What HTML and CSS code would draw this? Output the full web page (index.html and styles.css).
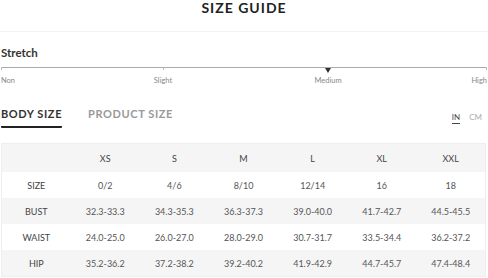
FILE: index.html
```html
<!DOCTYPE html>
<html lang="en">
<head>
    <meta charset="UTF-8">
    <meta name="viewport" content="width=device-width, initial-scale=1.0">
    <title>Size Guide</title>
    <link rel="stylesheet" href="styles.css">
</head>
<body>
    <div class="header">
        <h1>SIZE GUIDE</h1>
    </div>

    <div class="stretch">
        <h3>Stretch</h3>
        <div class="scale">
            <span class="tick tick-start"></span>
            <span class="tick tick-slight"></span>
            <span class="tick tick-end"></span>
            <span class="marker"></span>
        </div>
        <div class="scale-labels">
            <span class="lbl-non">Non</span>
            <span class="lbl-slight">Slight</span>
            <span class="lbl-medium">Medium</span>
            <span class="lbl-high">High</span>
        </div>
    </div>

    <div class="tabs">
        <div class="tab active">BODY SIZE</div>
        <div class="tab">PRODUCT SIZE</div>
        <div class="units">
            <span class="unit active">IN</span>
            <span class="unit">CM</span>
        </div>
    </div>

    <table class="size-table">
        <thead>
            <tr>
                <th></th>
                <th>XS</th>
                <th>S</th>
                <th>M</th>
                <th>L</th>
                <th>XL</th>
                <th>XXL</th>
            </tr>
        </thead>
        <tbody>
            <tr>
                <td>SIZE</td>
                <td>0/2</td>
                <td>4/6</td>
                <td>8/10</td>
                <td>12/14</td>
                <td>16</td>
                <td>18</td>
            </tr>
            <tr>
                <td>BUST</td>
                <td>32.3-33.3</td>
                <td>34.3-35.3</td>
                <td>36.3-37.3</td>
                <td>39.0-40.0</td>
                <td>41.7-42.7</td>
                <td>44.5-45.5</td>
            </tr>
            <tr>
                <td>WAIST</td>
                <td>24.0-25.0</td>
                <td>26.0-27.0</td>
                <td>28.0-29.0</td>
                <td>30.7-31.7</td>
                <td>33.5-34.4</td>
                <td>36.2-37.2</td>
            </tr>
            <tr>
                <td>HIP</td>
                <td>35.2-36.2</td>
                <td>37.2-38.2</td>
                <td>39.2-40.2</td>
                <td>41.9-42.9</td>
                <td>44.7-45.7</td>
                <td>47.4-48.4</td>
            </tr>
        </tbody>
    </table>
</body>
</html>
```

FILE: styles.css
```css
body {
    margin: 0;
    padding: 0;
    background: #fff;
    color: #333;
    font-family: 'Lato', 'Liberation Sans', sans-serif;
    width: 488px;
    overflow: hidden;
}
.header {
    height: 31px;
    border-bottom: 1px solid #f3f3f3;
    text-align: center;
}
h1 {
    margin: 0;
    font-size: 14px;
    line-height: 16px;
    font-weight: 700;
    letter-spacing: 1px;
    color: #222;
}
.stretch {
    padding: 0 1px;
}
h3 {
    margin: 14px 0 0;
    font-size: 11.5px;
    line-height: 14px;
    font-weight: 700;
    color: #333;
}
.scale {
    position: relative;
    height: 1px;
    margin-top: 7px;
    background: #aaa;
}
.tick {
    position: absolute;
    top: 0;
    width: 1px;
    height: 3px;
    background: #bbb;
}
.tick-start { left: 0; }
.tick-slight { left: 162px; }
.tick-end { right: 0; }
.marker {
    position: absolute;
    top: 1px;
    left: 324px;
    width: 0;
    height: 0;
    border-left: 3.5px solid transparent;
    border-right: 3.5px solid transparent;
    border-top: 5px solid #333;
}
.scale-labels {
    position: relative;
    height: 12px;
    margin-top: 7px;
    font-size: 7.5px;
    line-height: 12px;
    color: #888;
}
.scale-labels span {
    position: absolute;
    top: 0;
}
.lbl-non { left: 0; }
.lbl-slight { left: 162px; transform: translateX(-50%); }
.lbl-medium { left: 327px; transform: translateX(-50%); }
.lbl-high { right: 0; }
.tabs {
    display: flex;
    align-items: flex-start;
    margin-top: 20px;
    padding: 0 1px;
    height: 36px;
}
.tab {
    font-size: 11px;
    line-height: 14px;
    font-weight: 700;
    letter-spacing: 0.6px;
    color: #999;
    margin-right: 26px;
    padding-bottom: 5px;
}
.tab.active {
    color: #333;
    border-bottom: 2px solid #222;
    border-radius: 1px;
}
.units {
    margin-left: auto;
    margin-top: 5px;
    display: flex;
    gap: 9px;
    font-size: 8px;
    line-height: 10px;
    color: #aaa;
    padding-right: 5px;
}
.unit.active {
    color: #444;
    border-bottom: 1px solid #444;
    padding-bottom: 1px;
}
.size-table {
    margin: 0 1px;
    width: 485px;
    border-collapse: collapse;
    border: 1px solid #eee;
    table-layout: fixed;
    font-size: 9px;
    color: #555;
}
.size-table th,
.size-table td {
    text-align: center;
    padding: 0;
    font-weight: normal;
}
.size-table th {
    height: 28px;
    color: #444;
}
.size-table td {
    height: 26px;
}
.size-table thead tr,
.size-table tbody tr:nth-child(even) {
    background: #f5f5f5;
}
.size-table td:first-child {
    color: #444;
}
```
